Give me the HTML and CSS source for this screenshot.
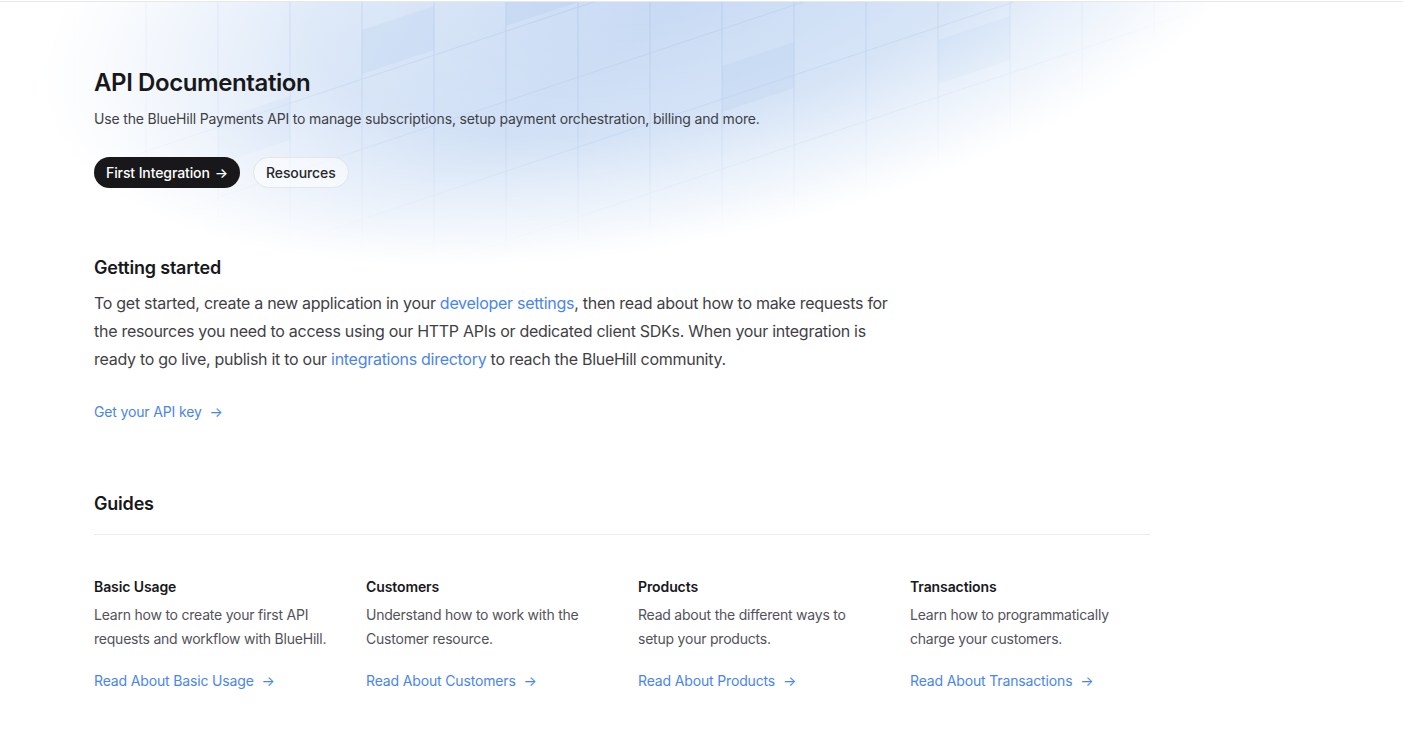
FILE: index.html
```html
<!DOCTYPE html>
<html lang="en">
<head>
<meta charset="utf-8">
<title>API Documentation</title>
<link rel="stylesheet" href="styles.css">
</head>
<body>
<div class="topline"></div>
<div class="page">
  <svg class="hero-art" width="1403" height="300" viewBox="0 0 1403 300" aria-hidden="true">
    <defs>
      <radialGradient id="fade" cx="0.5" cy="0.5" r="0.5">
        <stop offset="0" stop-color="#fff" stop-opacity="1"/>
        <stop offset="0.55" stop-color="#fff" stop-opacity="0.8"/>
        <stop offset="1" stop-color="#fff" stop-opacity="0"/>
      </radialGradient>
      <linearGradient id="tone" x1="0" y1="0" x2="1" y2="0.3">
        <stop offset="0" stop-color="#e5eefa"/>
        <stop offset="0.45" stop-color="#c6d9f3"/>
        <stop offset="0.75" stop-color="#d2e2f6"/>
        <stop offset="1" stop-color="#e8f0fb"/>
      </linearGradient>
      <mask id="m">
        <ellipse cx="660" cy="-20" rx="630" ry="265" fill="url(#fade)" transform="rotate(-11 660 -20)"/>
      </mask>
    </defs>
    <g mask="url(#m)">
      <rect x="0" y="0" width="1403" height="300" fill="url(#tone)"/>
      <g fill="#9dbce9" fill-opacity="0.2">
        <polygon points="506,0 578,0 578,2 506,26"/>
        <polygon points="722,66 794,42 794,88 722,112"/>
        <polygon points="218,120 290,96 290,140 218,164"/>
        <polygon points="938,40 1010,16 1010,60 938,84"/>
        <polygon points="362,30 434,6 434,50 362,74"/>
      </g>
      <g stroke="#a9c3ea" stroke-width="1" stroke-opacity="0.6">
        <line x1="74" y1="0" x2="74" y2="300"/>
        <line x1="146" y1="0" x2="146" y2="300"/>
        <line x1="218" y1="0" x2="218" y2="300"/>
        <line x1="290" y1="0" x2="290" y2="300"/>
        <line x1="362" y1="0" x2="362" y2="300"/>
        <line x1="434" y1="0" x2="434" y2="300"/>
        <line x1="506" y1="0" x2="506" y2="300"/>
        <line x1="578" y1="0" x2="578" y2="300"/>
        <line x1="650" y1="0" x2="650" y2="300"/>
        <line x1="722" y1="0" x2="722" y2="300"/>
        <line x1="794" y1="0" x2="794" y2="300"/>
        <line x1="866" y1="0" x2="866" y2="300"/>
        <line x1="938" y1="0" x2="938" y2="300"/>
        <line x1="1010" y1="0" x2="1010" y2="300"/>
        <line x1="1082" y1="0" x2="1082" y2="300"/>
        <line x1="1154" y1="0" x2="1154" y2="300"/>
      </g>
      <g stroke="#b3cbee" stroke-width="1" stroke-opacity="0.7">
        <line x1="0" y1="200" x2="1403" y2="-268"/>
        <line x1="0" y1="270" x2="1403" y2="-198"/>
        <line x1="0" y1="340" x2="1403" y2="-128"/>
        <line x1="0" y1="410" x2="1403" y2="-58"/>
        <line x1="0" y1="480" x2="1403" y2="12"/>
        <line x1="0" y1="550" x2="1403" y2="82"/>
        <line x1="0" y1="620" x2="1403" y2="152"/>
      </g>
    </g>
  </svg>

  <main class="content">
    <header class="hero">
      <h1 class="title">API Documentation</h1>
      <p class="subtitle">Use the BlueHill Payments API to manage subscriptions, setup payment orchestration, billing and more.</p>
      <div class="actions">
        <a class="btn btn-dark" href="#">First Integration <span class="arrow">→</span></a>
        <a class="btn btn-light" href="#">Resources</a>
      </div>
    </header>

    <section class="getting-started">
      <h2 class="section-title">Getting started</h2>
      <p class="lead">To get started, create a new application in your <a class="link" href="#">developer settings</a>, then read about how to make requests for the resources you need to access using our HTTP APIs or dedicated client SDKs. When your integration is ready to go live, publish it to our <a class="link" href="#">integrations directory</a> to reach the BlueHill community.</p>
      <a class="more-link" href="#">Get your API key <span class="arrow">→</span></a>
    </section>

    <section class="guides">
      <h2 class="section-title guides-title">Guides</h2>
      <div class="guide-grid">
        <article class="guide">
          <h3 class="guide-title">Basic Usage</h3>
          <p class="guide-desc">Learn how to create your first API requests and workflow with BlueHill.</p>
          <a class="more-link" href="#">Read About Basic Usage <span class="arrow">→</span></a>
        </article>
        <article class="guide">
          <h3 class="guide-title">Customers</h3>
          <p class="guide-desc">Understand how to work with the Customer resource.</p>
          <a class="more-link" href="#">Read About Customers <span class="arrow">→</span></a>
        </article>
        <article class="guide">
          <h3 class="guide-title">Products</h3>
          <p class="guide-desc">Read about the different ways to setup your products.</p>
          <a class="more-link" href="#">Read About Products <span class="arrow">→</span></a>
        </article>
        <article class="guide">
          <h3 class="guide-title">Transactions</h3>
          <p class="guide-desc">Learn how to programmatically charge your customers.</p>
          <a class="more-link" href="#">Read About Transactions <span class="arrow">→</span></a>
        </article>
      </div>
    </section>
  </main>
</div>
</body>
</html>
```

FILE: styles.css
```css
* { box-sizing: border-box; }

html, body {
  margin: 0;
  padding: 0;
  background: #ffffff;
}

body {
  font-family: Inter, "Noto Sans", "Liberation Sans", sans-serif;
  color: #18181b;
  -webkit-font-smoothing: antialiased;
}

.topline {
  height: 1px;
  margin-top: 1px;
  background: #e6e8ec;
  position: relative;
  z-index: 2;
}

.page {
  position: relative;
  min-height: 734px;
  overflow: hidden;
}

.hero-art {
  position: absolute;
  left: 0;
  top: -2px;
  z-index: 0;
  pointer-events: none;
}

.content {
  position: relative;
  z-index: 1;
  padding: 65px 0 40px 94px;
  width: 1150px;
}

.title {
  margin: 0;
  font-size: 24px;
  line-height: 32px;
  font-weight: 600;
  letter-spacing: -0.4px;
  color: #18181b;
}

.subtitle {
  margin: 10px 0 0;
  font-size: 14px;
  line-height: 20px;
  letter-spacing: -0.16px;
  color: #3f3f46;
}

.actions {
  display: flex;
  gap: 13px;
  margin-top: 28px;
}

.btn {
  display: inline-flex;
  align-items: center;
  height: 31px;
  padding: 0 12px;
  border-radius: 999px;
  font-size: 14px;
  line-height: 20px;
  letter-spacing: -0.1px;
  text-decoration: none;
  font-weight: 500;
}

.btn-dark {
  background: #18181b;
  color: #ffffff;
}

.btn-dark .arrow {
  margin-left: 5px;
}

.btn-light {
  background: rgba(255, 255, 255, 0.55);
  border: 1px solid #e3e5e8;
  color: #27272a;
}

.getting-started {
  margin-top: 66px;
}

.section-title {
  margin: 0;
  font-size: 18px;
  line-height: 28px;
  font-weight: 600;
  letter-spacing: -0.2px;
  color: #18181b;
}

.lead {
  margin: 7px 0 0;
  max-width: 800px;
  font-size: 16px;
  line-height: 28px;
  letter-spacing: -0.28px;
  color: #3f3f46;
}

.link {
  color: #4a85ee;
  text-decoration: none;
}

.more-link {
  display: inline-block;
  font-size: 14px;
  line-height: 20px;
  letter-spacing: -0.15px;
  color: #4a85ee;
  text-decoration: none;
}

.more-link .arrow {
  margin-left: 4px;
}

.getting-started .more-link {
  margin-top: 29px;
}

.guides {
  margin-top: 68px;
}

.guides-title {
  padding-bottom: 16px;
  border-bottom: 1px solid #ececee;
}

.guide-grid {
  display: grid;
  grid-template-columns: repeat(4, 240px);
  column-gap: 32px;
  margin-top: 42px;
}

.guide-title {
  margin: 0;
  font-size: 14px;
  line-height: 20px;
  font-weight: 600;
  letter-spacing: -0.1px;
  color: #18181b;
}

.guide-desc {
  margin: 6px 0 0;
  font-size: 14px;
  line-height: 24px;
  letter-spacing: -0.22px;
  color: #52525b;
}

.guide .more-link {
  margin-top: 20px;
}
```
